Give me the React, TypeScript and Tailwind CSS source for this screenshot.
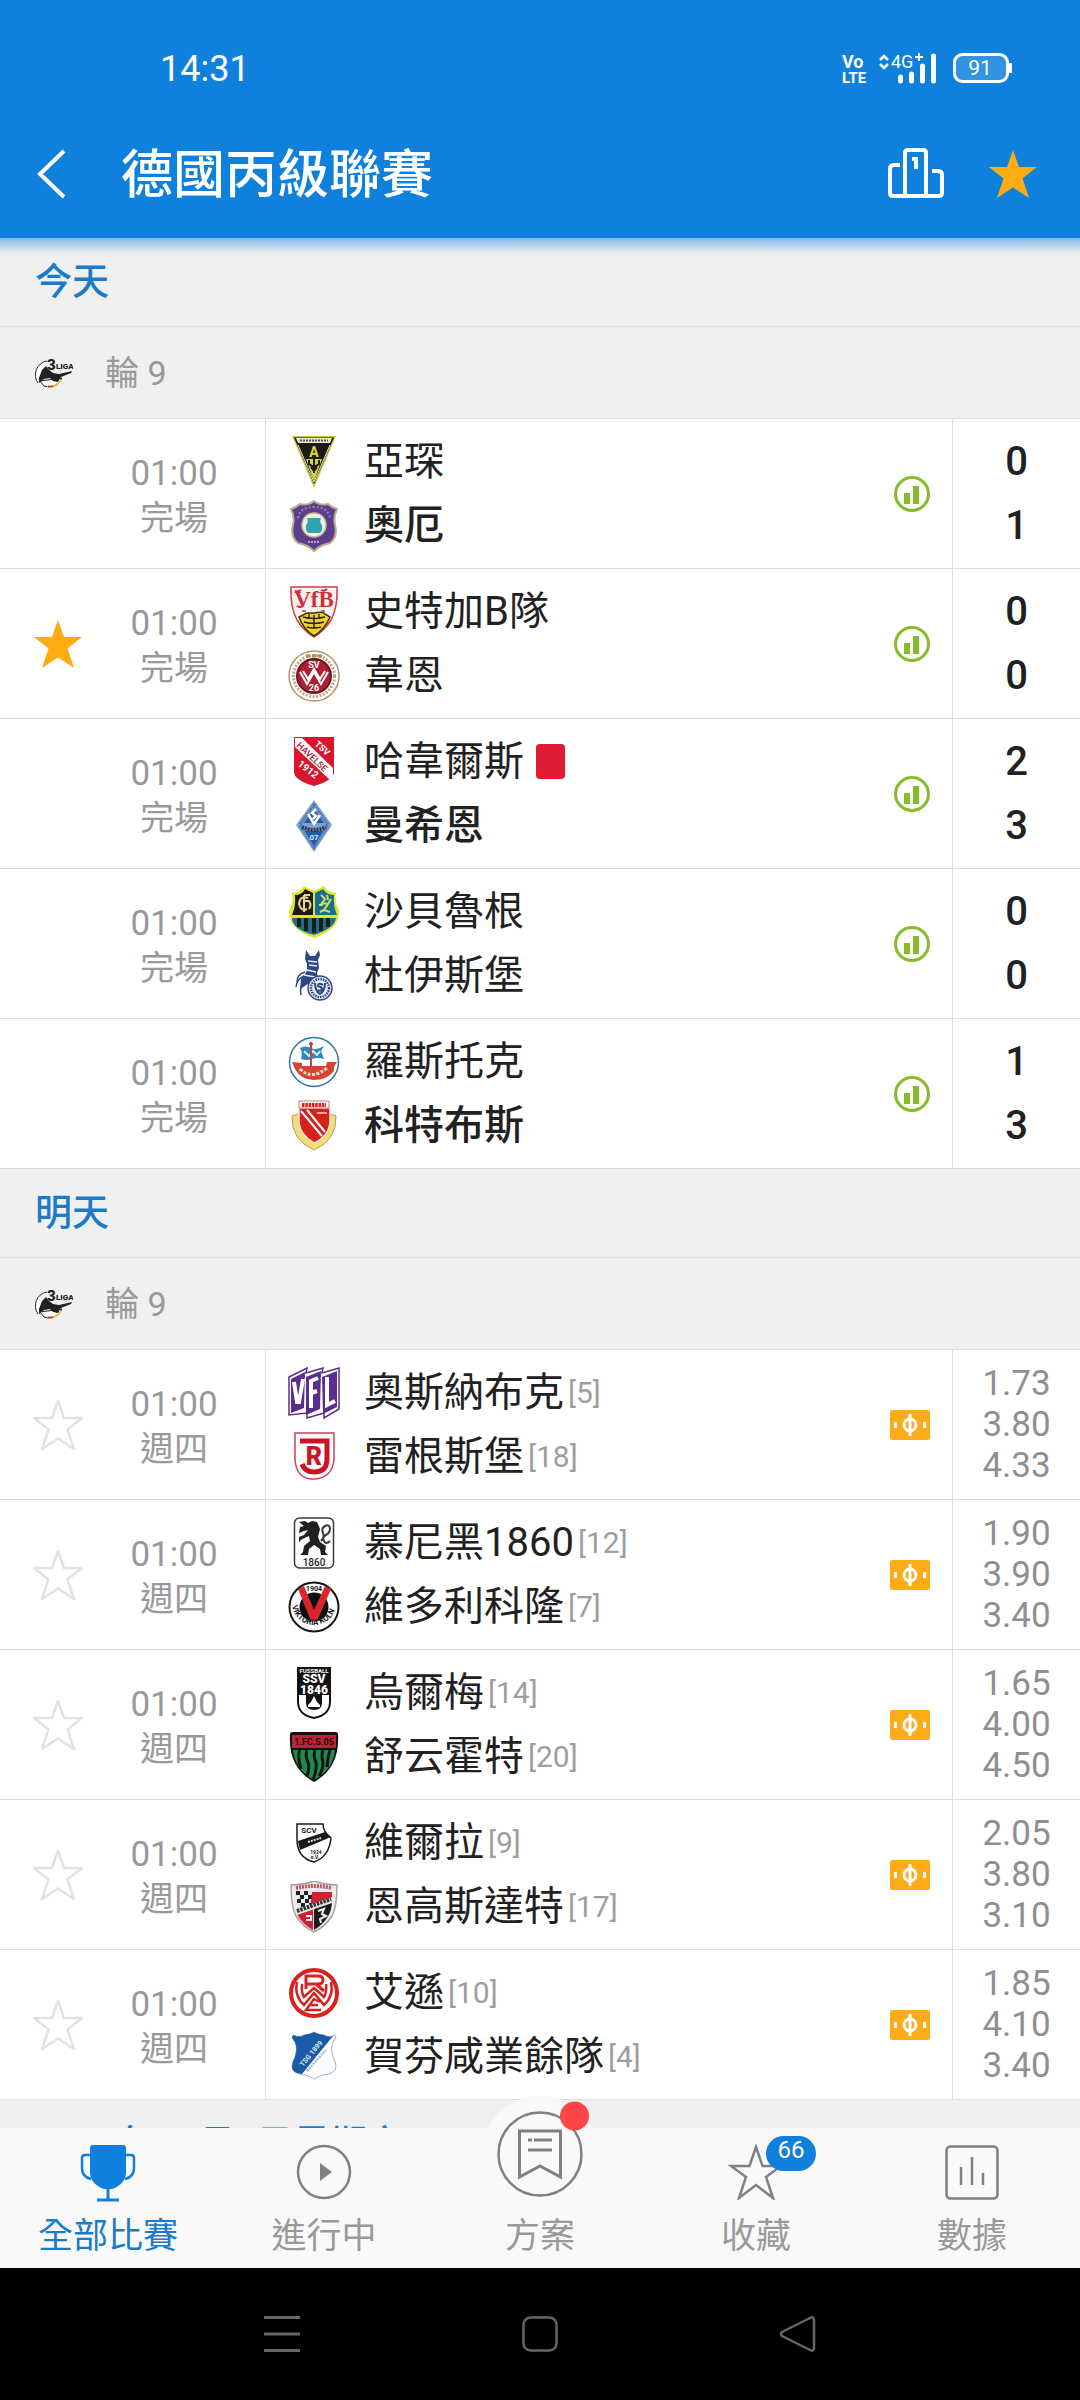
import type { ReactNode } from "react";

type Team = { name: string; crest: string; rank?: number; winner?: boolean; redCard?: boolean };
type Match = { status: string; home: Team; away: Team; starred?: boolean; score?: [number, number]; odds?: string[] };

const TODAY: Match[] = [
  { status: "完場", home: { name: "亞琛", crest: "aachen" }, away: { name: "奧厄", crest: "aue", winner: true }, score: [0, 1] },
  { status: "完場", starred: true, home: { name: "史特加B隊", crest: "stuttgart" }, away: { name: "韋恩", crest: "wehen" }, score: [0, 0] },
  { status: "完場", home: { name: "哈韋爾斯", crest: "havelse", redCard: true }, away: { name: "曼希恩", crest: "mannheim", winner: true }, score: [2, 3] },
  { status: "完場", home: { name: "沙貝魯根", crest: "saarbrucken" }, away: { name: "杜伊斯堡", crest: "duisburg" }, score: [0, 0] },
  { status: "完場", home: { name: "羅斯托克", crest: "rostock" }, away: { name: "科特布斯", crest: "cottbus", winner: true }, score: [1, 3] },
];

const TOMORROW: Match[] = [
  { status: "週四", home: { name: "奧斯納布克", crest: "osnabruck", rank: 5 }, away: { name: "雷根斯堡", crest: "regensburg", rank: 18 }, odds: ["1.73", "3.80", "4.33"] },
  { status: "週四", home: { name: "慕尼黑1860", crest: "munich", rank: 12 }, away: { name: "維多利科隆", crest: "viktoria", rank: 7 }, odds: ["1.90", "3.90", "3.40"] },
  { status: "週四", home: { name: "烏爾梅", crest: "ulm", rank: 14 }, away: { name: "舒云霍特", crest: "schweinfurt", rank: 20 }, odds: ["1.65", "4.00", "4.50"] },
  { status: "週四", home: { name: "維爾拉", crest: "verl", rank: 9 }, away: { name: "恩高斯達特", crest: "ingolstadt", rank: 17 }, odds: ["2.05", "3.80", "3.10"] },
  { status: "週四", home: { name: "艾遜", crest: "essen", rank: 10 }, away: { name: "賀芬咸業餘隊", crest: "hoffenheim", rank: 4 }, odds: ["1.85", "4.10", "3.40"] },
];

const STAR = "M25 1l6 17h18L34.500 29.500 41 49 25 38.500 9 49l6.500-19.500L1 18h18z";

// All crests share a 52x52 box.
const CRESTS: Record<string, ReactNode> = {
  aachen: (
    <>
      <path d="M4 0h44L26 52z" fill="#c9c53c" />
      <path d="M6 1.500h40L26 48z" fill="#1b1b17" />
      <path d="M8 2h36l-2 5H10z" fill="#e9e8c8" />
      <path d="M12 4.500h28" stroke="#555" strokeWidth="2" strokeDasharray="2 1" />
      <path d="M10 9l16 37L42 9" fill="none" stroke="#e9e8c8" />
      <path d="M18 23h16l-8 22z" fill="#d8d23c" />
      <path d="M21 24v4q5 5 10 0v-4M26 23v14M23 31l3 4 3-4" fill="none" stroke="#1b1b17" strokeWidth="2" />
      <text x="26" y="21" textAnchor="middle" fontSize="14" fontWeight="700" fill="#e2dc3c">A</text>
    </>
  ),
  aue: (
    <>
      <path d="M26 1q6 5 14 3 3 3 9 5-4 8-2 16 3 12-5 18-10 2-16 8-6-6-16-8-8-6-5-18 2-8-2-16 6-2 9-5 8 2 14-3z" fill="#5a3e8e" stroke="#c0aa86" strokeWidth="2" />
      <path d="M10 18q2-11 16-11t16 11" fill="none" stroke="#9a82a8" strokeWidth="2" strokeDasharray="2 2" />
      <circle cx="26" cy="25" r="12" fill="#f1efe6" stroke="#cdb98a" strokeWidth="1.500" />
      <path d="M19 18h14q-2 4 1 7 1 5-2 8H20q-3-3-2-8 3-3 1-7z" fill="#2fa5ab" />
      <path d="M20 42h12" stroke="#b4a3c4" strokeWidth="2" strokeDasharray="2 1" />
    </>
  ),
  stuttgart: (
    <>
      <path d="M3 1h46q1 20-6 33-7 11-17 17Q16 45 9 34 2 21 3 1z" fill="#fbf3f2" stroke="#c9403f" strokeWidth="1.500" />
      <path d="M11 31l8-4h7l8-1 8 5q-5 12-16 19-11-7-15-19z" fill="#f0d323" stroke="#3b3415" strokeWidth="1.500" />
      <path d="M15 31q10 3 22 0M16 36q10 3 20 0M19 41q7 2 14 0M21 28v5M26 29v14M31 28v5" fill="none" stroke="#2c2816" strokeWidth="1.500" />
      <text x="26" y="21" textAnchor="middle" fontSize="23" fontWeight="700" fill="#cf2f35" fontFamily="'Liberation Serif', serif">VfB</text>
      <path d="M7 5q3 1 6-1M33 4q3 2 6-1M9 20q3 2 6 0" fill="none" stroke="#cf2f35" strokeWidth="2" />
      <path d="M14 25h4M33 25h4" stroke="#b77" strokeWidth="2" />
    </>
  ),
  wehen: (
    <>
      <circle cx="26" cy="26" r="25" fill="#fff" stroke="#b5956b" strokeWidth="1.500" />
      <circle cx="26" cy="26" r="20.500" fill="none" stroke="#c4a58a" strokeWidth="3" strokeDasharray="2 1.500" />
      <circle cx="26" cy="26" r="17" fill="#b01e32" stroke="#6b1722" strokeWidth="2" />
      <path d="M12 22l7 12 7-12 7 12 7-12M15 21l5 8 6-10 6 10 5-8" fill="none" stroke="#fff" strokeWidth="2" />
      <text x="26" y="18" textAnchor="middle" fontSize="9" fontWeight="700" fill="#fff">SV</text>
      <text x="26" y="41" textAnchor="middle" fontSize="9" fontWeight="700" fill="#fff">26</text>
      <path d="M18 6h16" stroke="#b08a50" strokeWidth="3" strokeDasharray="4 2" />
    </>
  ),
  havelse: (
    <>
      <path d="M6 1h40v35q0 8-20 14Q6 44 6 36z" fill="#d9142c" />
      <path d="M7 2h7l31 30v8l-3 4L7 11z" fill="#fff" />
      <text transform="translate(8 10) rotate(43)" fontSize="9" fontWeight="500" fill="#b01228">HAVELSE</text>
      <text transform="translate(26 9) rotate(41)" fontSize="9" fontWeight="700" fill="#fff">TSV</text>
      <text transform="translate(9 29) rotate(38)" fontSize="10" fontWeight="700" fill="#fff">1912</text>
    </>
  ),
  mannheim: (
    <>
      <path d="M26 0l18 25-18 27L8 25z" fill="#7fa1cf" />
      <path d="M26 5l14 20-14 22-14-22z" fill="none" stroke="#4673b1" strokeWidth="3" strokeDasharray="1.500 1" />
      <path d="M26 9l10 14H16zM17 31h18l-9 15z" fill="#1f5ca6" />
      <path d="M20 14l6 10 6-9M28 9l-4 4 4 3-3 3" fill="none" stroke="#fff" strokeWidth="2.500" />
      <path d="M14 27q12 6 24 0" fill="none" stroke="#27364f" strokeWidth="4" strokeDasharray="2 1" />
      <text x="26" y="40" textAnchor="middle" fontSize="8" fontWeight="700" fill="#dfe9f7">07</text>
    </>
  ),
  saarbrucken: (
    <>
      <path d="M4 7q8 0 12-7l10 5 10-5q4 7 12 7-2 8 3 18 1 18-25 27Q0 43 1 25 6 15 4 7z" fill="#e3e329" />
      <path d="M7 9q7 0 10-6l8 4v22H4q4-9 3-20z" fill="#1e1a10" />
      <path d="M27 7l8-4q4 6 11 6-1 11 3 20H27z" fill="#176f96" />
      <path d="M4 32h44q-1 10-22 17Q4 43 4 32z" fill="#176f96" />
      <path d="M11 32v9M18 32v13M26 32v15M33 32v13M40 32v9" stroke="#1e1a10" strokeWidth="4" />
      <path d="M20 12q-8-3-9 6 2 8 8 5M16 9v17M16 15h5q3 4 0 8M16 9h6" fill="none" stroke="#e8d98a" strokeWidth="2" />
      <path d="M33 9l4 4-3 4 6 1-4 6 6 2M39 9l1 5M43 13l-3 5M31 19h4M32 26l4-2" fill="none" stroke="#d6dc5a" strokeWidth="2" />
    </>
  ),
  duisburg: (
    <>
      <path d="M18 0l4 6h5l4-6 1 5-2 5 1 8-2 5 1 6-8 3-5 4-5 3 1-10 6-8v-7l-2-5z" fill="#2e4686" />
      <path d="M20 11l9 1M21 15l8 1M19 20l9 2M16 25l11 2" stroke="#e8ecf5" strokeWidth="1.500" />
      <path d="M9 32q0-8 8-10M8 37q1-8 8-11M13 45q-2-8 4-13" fill="none" stroke="#2e4686" strokeWidth="1.500" />
      <circle cx="32" cy="38" r="12" fill="#e8ecf5" stroke="#2e4686" strokeWidth="1.500" />
      <circle cx="32" cy="38" r="9" fill="none" stroke="#2e4686" strokeWidth="2.500" strokeDasharray="1.500 1" />
      <path d="M27 33q0 8 5 11 5-3 5-11M35 35q-5-3-5 1 4 1 4 3-1 3-4 1" fill="none" stroke="#2e4686" strokeWidth="2" />
    </>
  ),
  rostock: (
    <>
      <circle cx="26" cy="26" r="24.500" fill="#fff" stroke="#2b78b0" strokeWidth="1.500" />
      <path d="M4 26l10 1v3h24l1-4h10q-4 5-3 9-7 9-20 9T7 33z" fill="#d8432f" />
      <path d="M12 12q6-3 11 0t13-2l-3 5 3 8q-7-2-12 0t-11 0q2-6-1-11z" fill="#2f86bd" />
      <path d="M16 15l5 5 4-5 4 4 3-4" fill="none" stroke="#dcecf5" strokeWidth="2" />
      <path d="M23 6v26M21 8h4" stroke="#c2473a" strokeWidth="2" />
      <path d="M12 33q12 12 28-2" fill="none" stroke="#f6dcd6" strokeWidth="3" strokeDasharray="3 1.500" />
    </>
  ),
  cottbus: (
    <>
      <path d="M4 16l6-2h32l6 2q1 24-22 34Q3 40 4 16z" fill="#f0df74" stroke="#bb9b6a" />
      <path d="M11 8h31v14q-1 14-16 21-14-8-15-21z" fill="#d71f1c" stroke="#f6e8d8" strokeWidth="1.500" />
      <path d="M11 1h30v7H11z" fill="#fff" stroke="#d77" />
      <path d="M14 5h24" stroke="#d71f1c" strokeWidth="4" strokeDasharray="2.500 .8" />
      <path d="M13 11l21 25M19 10l18 22" stroke="#fff" strokeWidth="2" />
      <path d="M29 13h10" stroke="#f0a9a0" strokeWidth="2" />
    </>
  ),
  osnabruck: (
    <>
      <path d="M1 10l18-9-1 5 17-5-1 5 17-5v41l-15 9v-5l-17 5v-5L1 48z" fill="#fff" stroke="#5b2e8c" strokeWidth="1.500" />
      <path d="M3 12l14-7-1 36-13 5zM18 10l15-6-1 38-14 6zM34 10l15-6v36l-14 7z" fill="#5b2e8c" />
      <path d="M6 15l3 20h2l4-23M23 41V14l7-3M23 26l6-2M39 10v28l8-4" fill="none" stroke="#fff" strokeWidth="4" />
    </>
  ),
  regensburg: (
    <>
      <path d="M7 2h39v27q-2 18-19.500 19T7 29z" fill="#fff" stroke="#c5465a" strokeWidth="1.500" />
      <path d="M12 10h27v18q0 13-13 13-9 0-12-8" fill="none" stroke="#cf1327" strokeWidth="5" />
      <text x="26" y="34" textAnchor="middle" fontSize="25" fontWeight="900" fill="#cf1327">R</text>
    </>
  ),
  munich: (
    <>
      <rect x="6.500" y="1" width="39" height="50" rx="5" fill="#fff" stroke="#3a3a3a" strokeWidth="1.500" />
      <path d="M11 5l6-1 3 2 4-2 5 1 3 7-2 8 2 5 6 4-1 6 3 3h-7l-1-6-6-4-5 4-1 6h-8l3-3 1-6 6-5-1-5-7 3-3 3v-5l5-2 4-5-4 1-5 2 1-6 4-1z" fill="#1f1f1f" />
      <path d="M33 24q4-4 2-8-2-5 2-7t5 2q0 5-4 7t-2 6 6 0" fill="none" stroke="#3a3a3a" strokeWidth="2" />
      <text x="26" y="49" textAnchor="middle" fontSize="10" fontWeight="500" fill="#1f1f1f">1860</text>
    </>
  ),
  viktoria: (
    <>
      <circle cx="26" cy="26" r="24.500" fill="#fff" stroke="#161616" strokeWidth="2" />
      <circle cx="26" cy="26" r="14.500" fill="#0f0f0f" />
      <path d="M10 8l6-3 10 24L37 5l6 3-14 32h-6z" fill="#d8262f" />
      <path id="koeln-arc" d="M4 22a22 22 0 1 0 44 0" fill="none" />
      <text fontSize="8" fontWeight="700" fill="#161616"><textPath href="#koeln-arc" startOffset="3">VIKTORIA KÖLN</textPath></text>
      <text x="26" y="10" textAnchor="middle" fontSize="7" fontWeight="700" fill="#161616">1904</text>
    </>
  ),
  ulm: (
    <>
      <path d="M9 0h34v34q0 15-17 18Q9 49 9 34z" fill="#111" />
      <path d="M11 28h7v8q0 7 8 7t8-7v-8h7v7q0 12-15 15-15-3-15-15z" fill="#fff" />
      <path d="M20 40v-2l3-3 3-6 3 6 3 3v2z" fill="#fff" />
      <text x="26" y="6" textAnchor="middle" fontSize="6" fontWeight="700" fill="#fff">FUSSBALL</text>
      <text x="26" y="16" textAnchor="middle" fontSize="12" fontWeight="900" fill="#fff">SSV</text>
      <text x="26" y="27" textAnchor="middle" fontSize="12" fontWeight="900" fill="#fff">1846</text>
    </>
  ),
  schweinfurt: (
    <>
      <path d="M2 3q0-2 3-2h42q3 0 3 2 1 18-5 29-6 12-19 19Q13 44 7 32 1 21 2 3z" fill="#131312" />
      <path d="M4 4h44v13H4z" fill="#bf2036" />
      <path d="M5 19h42q-2 20-21 30Q7 39 5 19z" fill="#1f8a4c" />
      <path d="M12 18q-3 8 1 20M19 18q-2 8 1 13 2 6-1 14M27 18q-2 8 1 13 1 8-3 18M35 18q-2 8 0 13 0 8-4 14M42 18q-2 8-3 18" fill="none" stroke="#131312" strokeWidth="3" />
      <text x="26" y="14" textAnchor="middle" fontSize="9" fontWeight="700" fill="#1c0b0d">1.FC.S.05</text>
    </>
  ),
  verl: (
    <>
      <path d="M9 7h26q0 8 8 14-2 19-17 24Q9 41 9 22z" fill="#fff" stroke="#191919" strokeWidth="1.500" />
      <path d="M10 24l27-9 6 5-31 13z" fill="#191919" />
      <path d="M20 25l13-4" stroke="#ddd" strokeWidth="2" strokeDasharray="2 1" />
      <text x="21" y="16" textAnchor="middle" fontSize="8" fontWeight="700" fill="#191919">SCV</text>
      <text x="28" y="37" textAnchor="middle" fontSize="5" fontWeight="700" fill="#191919">1924</text>
      <text x="27" y="42" textAnchor="middle" fontSize="5" fontWeight="700" fill="#191919">e.V.</text>
    </>
  ),
  ingolstadt: (
    <>
      <path d="M3 4q12 0 23-4 11 4 23 4 0 22-5 31-6 10-18 16Q14 45 8 35 3 26 3 4z" fill="#eceaea" stroke="#a3a3a3" strokeWidth="1.500" />
      <path d="M8 7q18-4 36 0" fill="none" stroke="#c8535d" strokeWidth="4" strokeDasharray="2 1" />
      <path d="M24 11h20v8L22 29z" fill="#d21f33" />
      <path d="M8 12h16M12 16h12M9 20h15M13 24h10" stroke="#222" strokeWidth="4" strokeDasharray="4 4" />
      <path d="M9 33l16-6v22Q14 43 9 33z" fill="#d21f33" />
      <path d="M26 27l18-7q0 18-18 29z" fill="#1b1b1b" />
      <path d="M6 29L44 16v6L9 34z" fill="#e8e8e8" />
      <path d="M9 30l34-12" stroke="#333" strokeWidth="4" strokeDasharray="2.500 1" />
      <path d="M30 30l6-2-2 5 4 2-6 3 1 4M18 35h5v4h-5" fill="none" stroke="#eee" strokeWidth="2" />
    </>
  ),
  essen: (
    <>
      <circle cx="26" cy="26" r="23" fill="#fff" stroke="#d6231f" strokeWidth="4" />
      <path d="M18 22V9h12q5 0 5 4t-5 4H18M28 17l8 7" fill="none" stroke="#d6231f" strokeWidth="3" />
      <path d="M9 15q-3 14 7 23l10-12 10 12q10-9 7-23M14 17q-1 8 2 13l10-9 10 9q3-5 2-13" fill="none" stroke="#d6231f" strokeWidth="2.500" />
      <path d="M33 43H18l8-11 6 3M22 38h8" fill="none" stroke="#d6231f" strokeWidth="2.500" />
    </>
  ),
  hoffenheim: (
    <>
      <path d="M5 4q7 3 11 0 5 0 10-3 5 3 10 3 4 3 11 0l1 3q-7 8-3 19 3 5 3 10-1 7-13 8-6 2-9 4-3-2-9-4-12-1-13-8 0-5 3-10Q11 14 4 7z" fill="#fbfcfd" stroke="#9fb4c8" />
      <path d="M5 4q7 3 11 0 5 0 10-3 5 3 10 3 4 3 9 1L14 43Q4 42 4 36q0-5 3-10Q11 14 4 7z" fill="#1a5aa6" />
      <text transform="translate(15 36) rotate(-50)" fontSize="7" fontWeight="700" fill="#dce8f5">TSG 1899</text>
      <path d="M19 40l19-21" stroke="#9eb0c4" strokeWidth="2" strokeDasharray="2 1" />
    </>
  ),
};

function Crest({ id }: { id: string }) {
  return (
    <svg viewBox="0 0 52 52" className="size-[52px] shrink-0" aria-hidden="true">
      {CRESTS[id]}
    </svg>
  );
}

function LigaLogo() {
  return (
    <svg viewBox="0 0 38 30" className="h-[30px] w-[38px] shrink-0" aria-hidden="true">
      <path d="M3 25A14 14 0 0 1 12 3M27 20a14 14 0 0 1-18 8l-4-5z" fill="#fff" stroke="#222" />
      <path d="M7 12l4-4 2 3 5 4 6 1 13-3-1 2-10 4-3 5-5-1-3-3-6 1-5 4 0-5z" fill="#222" />
      <path d="M12 28q9 2 14-6" fill="none" stroke="#e6bb3c" strokeWidth="1.500" />
      <path d="M13 28.500h5" stroke="#c0303a" strokeWidth="1.500" />
      <text x="12" y="12" fontSize="15" fontWeight="900" fill="#222">3</text>
      <text x="21" y="11" fontSize="8" fontWeight="900" fill="#222">LIGA</text>
    </svg>
  );
}

function StatusBar() {
  return (
    <div className="flex h-[110px] items-center justify-between pt-7 pr-[62px] pl-40 text-white">
      <span className="text-4xl">14:31</span>
      <svg viewBox="-6 -8 182 48" className="h-12 w-[182px]" aria-label="VoLTE, 4G+, 91%">
        <text x="0" y="15" fontSize="18" fontWeight="700" fill="#fff">Vo</text>
        <text x="0" y="30" fontSize="15" fontWeight="700" fill="#fff" fontFamily="'Liberation Sans Narrow', Roboto, sans-serif">LTE</text>
        <path d="M38 7l4-4 4 4M38 11l4 4 4-4" fill="none" stroke="#fff" strokeWidth="2.500" />
        <text x="49" y="15" fontSize="18" fill="#fff">4G</text>
        <path d="M77 0v8M73 4h8" stroke="#fff" strokeWidth="2" />
        <path d="M58.500 24v4M69.500 21v7M80.500 13v15M91.500 3v25" stroke="#fff" strokeWidth="5" strokeLinecap="round" />
        <rect x="112.500" y="1.500" width="53" height="27" rx="8" fill="#fff" fillOpacity=".15" stroke="#fff" strokeWidth="3" />
        <path d="M168.500 10v10" stroke="#fff" strokeWidth="3" />
        <text x="138" y="22" textAnchor="middle" fontSize="21" fill="#fff">91</text>
      </svg>
    </div>
  );
}

function Header() {
  return (
    <header className="relative z-10 shrink-0 bg-[#0f80dc]">
      <StatusBar />
      <div className="flex h-32 items-center pr-[42px] pl-9">
        <button type="button" aria-label="返回">
          <svg viewBox="0 0 32 50" className="h-[50px] w-8">
            <path d="M28 2L4 25l24 23" fill="none" stroke="#fff" strokeWidth="4" />
          </svg>
        </button>
        <h1 className="ml-[53px] flex-1 pt-1 text-[52px] leading-[72px] font-medium text-white">德國丙級聯賽</h1>
        <button type="button" aria-label="排名">
          <svg viewBox="0 0 56 52" className="h-[52px] w-14">
            <path d="M12 17H6q-4 0-4 4v24q0 3 3 3h46q3 0 3-3V27q0-4-4-4h-6M17 48V5q0-3 3-3h15q3 0 3 3v43" fill="none" stroke="#fff" strokeWidth="4" />
            <path d="M24 11h4v10" fill="none" stroke="#fff" strokeWidth="4" />
          </svg>
        </button>
        <button type="button" aria-label="取消收藏" className="ml-11">
          <svg viewBox="0 0 50 50" className="size-[50px]">
            <path d={STAR} fill="#ffab12" />
          </svg>
        </button>
      </div>
      <div className="absolute inset-x-0 top-full h-4 bg-linear-to-b from-[#0f80dc]/50 to-transparent" />
    </header>
  );
}

function SectionTitle({ children }: { children: ReactNode }) {
  return (
    <h2 className="h-[89px] border-b border-[#dedede] bg-[#f0f0f0] pl-[35px] text-[37px] leading-[90px] font-medium text-[#1a7cc8]">
      {children}
    </h2>
  );
}

function RoundBar({ label }: { label: string }) {
  return (
    <div className="flex h-[92px] items-center gap-8 border-b border-[#dedede] bg-[#f0f0f0] pl-[35px]">
      <LigaLogo />
      <span className="text-[34px] leading-[48px] text-[#999999]">{label}</span>
    </div>
  );
}

function TeamLine({ team }: { team: Team }) {
  return (
    <div className="flex h-16 items-center">
      <Crest id={team.crest} />
      <span className={`ml-6 text-[40px] leading-[64px] text-[#212121] ${team.winner ? "font-medium" : "font-normal"}`}>
        {team.name}
      </span>
      {team.redCard && <span className="ml-3 h-[35px] w-[29px] rounded-sm bg-[#e01c33]" aria-label="紅牌" />}
      {team.rank && <span className="ml-1 text-[30px] text-[#9e9e9e]">[{team.rank}]</span>}
    </div>
  );
}

function StatsIcon() {
  return (
    <svg viewBox="0 0 36 36" className="size-9">
      <circle cx="18" cy="18" r="16.500" fill="none" stroke="#86bc2c" strokeWidth="3" />
      <path d="M10 17h6v11h-6zM19 10h6v18h-6z" fill="#86bc2c" />
    </svg>
  );
}

function PitchIcon() {
  return (
    <svg viewBox="0 0 40 30" className="h-[30px] w-10">
      <rect width="40" height="30" rx="2" fill="#fbac18" />
      <circle cx="20" cy="15" r="6" fill="none" stroke="#fff" strokeWidth="3" />
      <path d="M20 4v22M5.500 12v6M34.500 12v6" stroke="#fff" strokeWidth="3" />
    </svg>
  );
}

function MatchRow({ match }: { match: Match }) {
  const { status, home, away, starred, score, odds } = match;
  return (
    <li className="flex h-[150px] border-b border-[#dedede] bg-white">
      <div className="flex w-[266px] items-center border-r border-[#dedede] pl-[33px]">
        <div className="w-[50px]">
          {(starred || odds) && (
            <button type="button" aria-label="收藏" className="block">
              <svg viewBox="0 0 50 50" className="size-[50px]">
                <path d={STAR} fill={starred ? "#ffab12" : "none"} stroke={starred ? "none" : "#e2e2e2"} strokeWidth="2.500" />
              </svg>
            </button>
          )}
        </div>
        <div className="flex-1 pt-1 text-center text-[#999999]">
          <p className="text-[35px] leading-[44px]">01:00</p>
          <p className="text-[34px] leading-[44px]">{status}</p>
        </div>
      </div>
      <div className="flex flex-1 flex-col justify-center pl-[22px]">
        <TeamLine team={home} />
        <TeamLine team={away} />
      </div>
      <div className="flex items-center pr-[22px]">{score ? <StatsIcon /> : <PitchIcon />}</div>
      <div className="flex w-32 flex-col justify-center border-l border-[#dedede] text-center">
        {score?.map((goals, i) => (
          <span key={i} className="text-[40px] leading-[64px] font-medium text-[#212121]">{goals}</span>
        ))}
        {odds?.map((odd, i) => (
          <span key={i} className="text-[35px] leading-[41px] text-[#8f8f8f]">{odd}</span>
        ))}
      </div>
    </li>
  );
}

function TabItem({ label, active, children }: { label: string; active?: boolean; children?: ReactNode }) {
  return (
    <a href="#" className={`relative flex flex-col items-center pt-4 ${active ? "text-[#1a7cc8]" : "text-[#999999]"}`}>
      <span className="relative flex h-14 justify-center">{children}</span>
      <span className="relative mt-[13px] text-[35px] leading-[48px]">{label}</span>
    </a>
  );
}

function TabBar() {
  return (
    <nav className="relative z-10 grid h-[140px] shrink-0 grid-cols-5 bg-[#f9f9f9]">
      <TabItem label="全部比賽" active>
        <svg viewBox="0 0 56 58" className="h-[58px] w-14">
          <path d="M10 4q0-3 3-3h30q3 0 3 3v24q0 12-14 17h-8Q10 40 10 28z" fill="#0f80dc" />
          <path d="M10 11H5q-3 0-3 3v10q0 9 9 11M46 11h5q3 0 3 3v10q0 9-9 11" fill="none" stroke="#0f80dc" strokeWidth="2.500" />
          <path d="M28 44v12" stroke="#0f80dc" strokeWidth="3" />
          <path d="M17 56h22" stroke="#0f80dc" strokeWidth="3" />
        </svg>
      </TabItem>
      <TabItem label="進行中">
        <svg viewBox="0 0 56 56" className="size-14">
          <circle cx="28" cy="28" r="26" fill="none" stroke="#808080" strokeWidth="2.500" />
          <path d="M24 19l12 9-12 9z" fill="#808080" />
        </svg>
      </TabItem>
      <TabItem label="方案">
        <svg viewBox="0 0 116 116" className="absolute -top-12 left-1/2 size-[116px] -translate-x-1/2">
          <circle cx="58" cy="58" r="58" fill="#f9f9f9" />
          <circle cx="58" cy="58" r="41.500" fill="none" stroke="#808080" strokeWidth="2.500" />
          <path d="M37.500 35h41v46L58 70 37.500 81z" fill="none" stroke="#808080" strokeWidth="3" />
          <path d="M46 44h4M52 44h18M46 54h24" stroke="#808080" strokeWidth="3" />
          <circle cx="92.500" cy="20" r="14.500" fill="#ff4548" />
        </svg>
      </TabItem>
      <TabItem label="收藏">
        <svg viewBox="0 0 56 56" className="size-14">
          <path d="M28 3l6.500 19H53L38 33l7 21-17-13-17 13 7-21L3 22h18.500z" fill="none" stroke="#808080" strokeWidth="2.500" />
        </svg>
        <span className="absolute -top-2 left-[38px] h-[35px] w-[50px] rounded-full bg-[#0f80dc] text-center text-2xl leading-[28px] text-white">
          66
        </span>
      </TabItem>
      <TabItem label="數據">
        <svg viewBox="0 0 56 56" className="size-14">
          <rect x="2.500" y="2.500" width="51" height="52" rx="4" fill="none" stroke="#808080" strokeWidth="2.500" />
          <path d="M17 23v18M28 13v28M39 29v12" stroke="#808080" strokeWidth="2.500" />
        </svg>
      </TabItem>
    </nav>
  );
}

function SystemBar() {
  return (
    <div className="flex h-[132px] shrink-0 items-center justify-center gap-[222px] bg-black">
      <button type="button" aria-label="最近">
        <svg viewBox="0 0 36 36" className="size-9">
          <path d="M0 1.500h36M0 18h36M0 34.500h36" stroke="#666" strokeWidth="3" />
        </svg>
      </button>
      <button type="button" aria-label="主頁">
        <svg viewBox="0 0 36 36" className="size-9">
          <rect x="1.500" y="1.500" width="33" height="33" rx="7" fill="none" stroke="#666" strokeWidth="2.500" />
        </svg>
      </button>
      <button type="button" aria-label="上一頁">
        <svg viewBox="0 0 36 36" className="size-9">
          <path d="M30 2q4-2 4 2v28q0 4-4 2L2 20q-2-2 0-4z" fill="none" stroke="#666" strokeWidth="2.500" />
        </svg>
      </button>
    </div>
  );
}

export default function App() {
  return (
    <div className="flex h-screen flex-col bg-[#f0f0f0] font-['Roboto','Noto_Sans_CJK_TC',sans-serif]">
      <Header />
      <main className="min-h-0 flex-1 overflow-hidden">
        <SectionTitle>今天</SectionTitle>
        <RoundBar label="輪 9" />
        <ul>
          {TODAY.map((match) => (
            <MatchRow key={match.home.name} match={match} />
          ))}
        </ul>
        <SectionTitle>明天</SectionTitle>
        <RoundBar label="輪 9" />
        <ul>
          {TOMORROW.map((match) => (
            <MatchRow key={match.home.name} match={match} />
          ))}
        </ul>
        <SectionTitle>2025年10月4日星期六</SectionTitle>
      </main>
      <TabBar />
      <SystemBar />
    </div>
  );
}
